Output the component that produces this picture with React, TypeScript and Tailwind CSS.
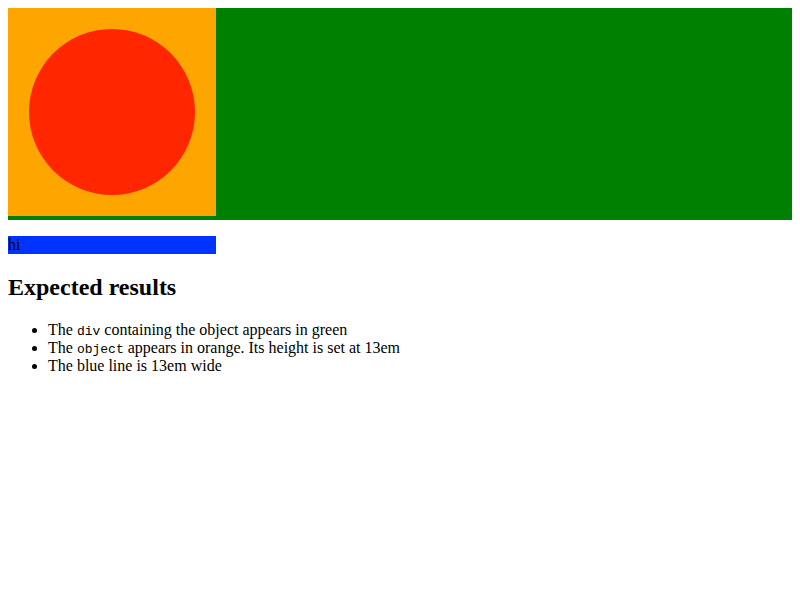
export default function App() {
  return (
    <div className="m-2 font-['Liberation_Serif',serif] text-[16px] leading-[18px] text-black">
      {/* green container with the orange object */}
      <div className="bg-[#008000] pb-1">
        <div className="flex h-[208px] w-[208px] items-center justify-center bg-[#ffa500]">
          <svg width="208" height="208" viewBox="0 0 208 208" aria-hidden>
            <circle cx="104" cy="104" r="83" fill="#ff2600" />
          </svg>
        </div>
      </div>

      <div className="mt-4 w-[208px] bg-[#0033ff]">hi</div>

      <h2 className="my-[19.92px] text-[24px] leading-[27px] font-bold">Expected results</h2>

      <ul className="list-disc pl-10">
        <li>
          The <code className="font-['Liberation_Mono',monospace] text-[13px] leading-none">div</code> containing the object appears in green
        </li>
        <li>
          The <code className="font-['Liberation_Mono',monospace] text-[13px] leading-none">object</code> appears in orange. Its height is set at 13em
        </li>
        <li>The blue line is 13em wide</li>
      </ul>
    </div>
  )
}
